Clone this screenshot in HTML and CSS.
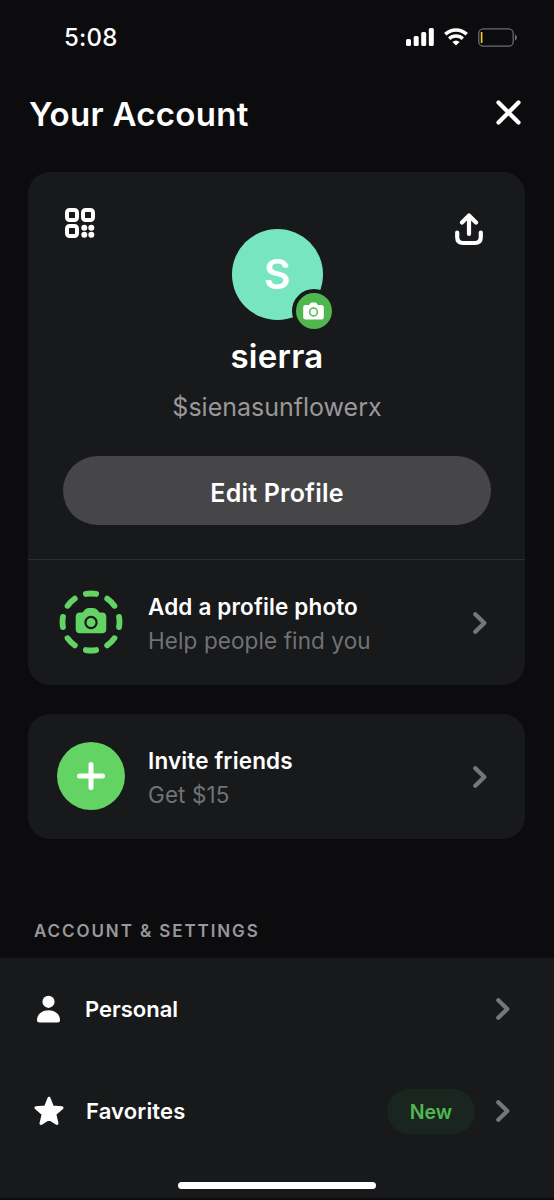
FILE: index.html
```
<!DOCTYPE html>
<html lang="en">
<head>
    <meta charset="UTF-8">
    <meta name="viewport" content="width=device-width, initial-scale=1.0">
    <title>Your Account</title>
    <link rel="stylesheet" href="styles.css">
</head>
<body>

<div class="screen">
    <!-- Status bar -->
    <div class="status-bar">
        <span class="time">5:08</span>
        <div class="status-icons">
            <svg class="signal" width="28" height="18" viewBox="0 0 28 18" fill="#fff">
                <rect x="0" y="11" width="5" height="7" rx="1.5"/>
                <rect x="7.7" y="8" width="5" height="10" rx="1.5"/>
                <rect x="15.2" y="4" width="5" height="14" rx="1.5"/>
                <rect x="22.8" y="0" width="5" height="18" rx="1.5"/>
            </svg>
            <svg class="wifi" width="24" height="18" viewBox="0 0 24 18" fill="none" stroke="#fff" stroke-width="3.4">
                <path d="M1.3 6.3A15.4 15.4 0 0 1 22.7 6.3"/>
                <path d="M5.2 10.8A9.8 9.8 0 0 1 18.8 10.8"/>
                <path d="M12 17.6L8.4 14.1A5 5 0 0 1 15.6 14.1Z" fill="#fff" stroke="none"/>
            </svg>
            <svg class="battery" width="39" height="19" viewBox="0 0 39 19" fill="none">
                <rect x="0.8" y="0.8" width="34.4" height="17.4" rx="4.5" stroke="#6c6c6c" stroke-width="1.3"/>
                <rect x="2.8" y="4" width="1.6" height="11" rx="0.6" fill="#f4d03c"/>
                <path d="M37 6.5C39.4 7.6 39.4 11.4 37 12.5Z" fill="#777"/>
            </svg>
        </div>
    </div>

    <header class="header">
        <h1>Your Account</h1>
        <svg class="close" width="25" height="25" viewBox="0 0 25 25" stroke="#fff" stroke-width="4.2" stroke-linecap="round">
            <path d="M2.5 2.5L22.5 22.5M22.5 2.5L2.5 22.5"/>
        </svg>
    </header>

    <!-- Profile card -->
    <section class="card">
        <div class="profile">
            <div class="profile-top">
                <svg class="qr" width="30" height="30" viewBox="0 0 30 30" fill="none" stroke="#fff" stroke-width="4">
                    <rect x="2" y="2" width="10" height="10" rx="2.5"/>
                    <rect x="18" y="2" width="10" height="10" rx="2.5"/>
                    <rect x="2" y="18" width="10" height="10" rx="2.5"/>
                    <g fill="#fff" stroke="none">
                        <circle cx="19.3" cy="19.7" r="3"/>
                        <circle cx="26.3" cy="19.7" r="3"/>
                        <circle cx="19.3" cy="26.7" r="3"/>
                        <circle cx="26.3" cy="26.7" r="3"/>
                    </g>
                </svg>
                <div class="avatar">
                    <span>S</span>
                    <div class="badge">
                        <svg width="21" height="18" viewBox="0 0 21 18">
                            <path d="M2.5 3H6.2L7.3 1.3Q7.8 0.5 8.7 0.5H12.3Q13.2 0.5 13.7 1.3L14.8 3H18.5Q20.8 3 20.8 5.3V15.2Q20.8 17.5 18.5 17.5H2.5Q0.2 17.5 0.2 15.2V5.3Q0.2 3 2.5 3Z" fill="#fff"/>
                            <circle cx="10.5" cy="10" r="3.9" fill="none" stroke="#50b74f" stroke-width="1.5"/>
                        </svg>
                    </div>
                </div>
                <svg class="share" width="28" height="33" viewBox="0 0 28 33" fill="none" stroke="#fff" stroke-width="4.2" stroke-linecap="round" stroke-linejoin="round">
                    <path d="M14 21V3M7 9.5L14 2.5L21 9.5"/>
                    <path d="M2.2 19.5V24Q2.2 30 8.2 30H19.8Q25.8 30 25.8 24V19.5"/>
                </svg>
            </div>
            <h2 class="name">sierra</h2>
            <p class="handle">$sienasunflowerx</p>
            <button class="edit-button" type="button">Edit Profile</button>
        </div>

        <div class="card-row">
            <div class="row-icon">
                <svg width="64" height="64" viewBox="0 0 64 64">
                    <circle cx="32" cy="32" r="28.5" fill="none" stroke="#63d363" stroke-width="5.8" stroke-linecap="round" pathLength="80" stroke-dasharray="4.6 5.4" stroke-dashoffset="2.3"/>
                    <path d="M21 22.5H23.5L26 19.600Q27.5 18 29.5 18H34.5Q36.5 18 38 19.6L40.5 22.5H43Q47.3 22.5 47.3 26.8V39Q47.3 43.3 43 43.3H21Q16.7 43.3 16.7 39V26.8Q16.7 22.5 21 22.5Z" fill="#63d363"/>
                    <circle cx="32" cy="32.5" r="5.6" fill="none" stroke="#18191b" stroke-width="2.2"/>
                </svg>
            </div>
            <div class="row-text">
                <h3 class="photo-title">Add a profile photo</h3>
                <p class="photo-sub">Help people find you</p>
            </div>
            <svg class="chevron" width="14" height="22" viewBox="0 0 14 22"><path d="M2.3 2.3L11.3 11L2.3 19.7"/></svg>
        </div>
    </section>

    <!-- Invite card -->
    <section class="card invite-card">
        <div class="card-row">
            <div class="row-icon">
                <svg width="68" height="68" viewBox="0 0 68 68">
                    <circle cx="34" cy="34" r="34" fill="#63d363"/>
                    <path d="M34 22.5V45.5M22.5 34H45.5" stroke="#fff" stroke-width="5" stroke-linecap="round"/>
                </svg>
            </div>
            <div class="row-text">
                <h3 class="invite-title">Invite friends</h3>
                <p class="invite-sub">Get $15</p>
            </div>
            <svg class="chevron" width="14" height="22" viewBox="0 0 14 22"><path d="M2.3 2.3L11.3 11L2.3 19.7"/></svg>
        </div>
    </section>

    <h4 class="section-label">ACCOUNT &amp; SETTINGS</h4>

    <!-- Settings list -->
    <div class="settings">
        <div class="setting">
            <svg width="30" height="30" viewBox="0 0 30 30" fill="#fff">
                <circle cx="14.5" cy="7.8" r="6.1"/>
                <path d="M3 26C3 20.5 8 16.3 14.5 16.3S26 20.5 26 26Q26 28.5 23.500 28.5H5.5Q3 28.5 3 26Z"/>
            </svg>
            <span class="setting-name personal">Personal</span>
            <svg class="chevron" width="14" height="22" viewBox="0 0 14 22"><path d="M2.3 2.3L11.3 11L2.3 19.7"/></svg>
        </div>
        <div class="setting">
            <svg width="30" height="30" viewBox="0 0 30 30" fill="#fff" stroke="#fff" stroke-width="3" stroke-linejoin="round">
                <path d="M15 2.2L18.5 11L28 11.8L20.8 18L23 27.4L15 22.4L7 27.4L9.2 18L2 11.8L11.5 11Z"/>
            </svg>
            <span class="setting-name favorites">Favorites</span>
            <span class="new-tag">New</span>
            <svg class="chevron" width="14" height="22" viewBox="0 0 14 22"><path d="M2.3 2.3L11.3 11L2.3 19.7"/></svg>
        </div>
        <div class="home-indicator"></div>
    </div>
</div>

</body>
</html>
```
FILE: styles.css
```
body {
    margin: 0;
    background-color: #0c0c0f;
    color: #fff;
    font-family: Inter, "Open Sans", sans-serif;
}

* {
    box-sizing: border-box;
}

h1, h2, h3, h4, p {
    margin: 0;
    font-weight: 600;
    white-space: nowrap;
}

svg {
    display: block;
    flex-shrink: 0;
}

.screen {
    width: 554px;
    height: 1200px;
    overflow: hidden;
    display: flex;
    flex-direction: column;
}

.status-bar {
    height: 74px;
    padding: 0 37px 0 64px;
    display: flex;
    align-items: center;
    justify-content: space-between;
}

.time {
    font-size: 24px;
    font-weight: 500;
    letter-spacing: 0.2px;
}

.status-icons {
    display: flex;
    align-items: center;
}

.wifi {
    margin: 0 10px;
}

.header {
    height: 98px;
    padding: 26px 33px 0 29px;
    display: flex;
    justify-content: space-between;
}

h1 {
    font-size: 33px;
    line-height: 29px;
    letter-spacing: 0.3px;
}

.card {
    width: 497px;
    margin-left: 28px;
    background-color: #18191b;
    border-radius: 22px;
}

.profile {
    height: 388px;
    padding: 36px 34px 0 35px;
    display: flex;
    flex-direction: column;
    border-bottom: 1px solid #2c2d2f;
}

.profile-top {
    height: 130px;
    padding: 0 8px 0 2px;
    display: flex;
    justify-content: space-between;
}

.avatar {
    position: relative;
    width: 91px;
    height: 91px;
    margin: 21px 0 0 4px;
    border-radius: 50%;
    background-color: #77e6c0;
    text-align: center;
    font-size: 41px;
    font-weight: 600;
    line-height: 91px;
}

.badge {
    position: absolute;
    left: 60px;
    top: 60px;
    width: 44px;
    height: 44px;
    border: 4px solid #18191b;
    border-radius: 50%;
    background-color: #50b74f;
    display: flex;
    align-items: center;
    justify-content: center;
}

.share {
    margin-top: 5px;
}

.name {
    height: 50px;
    line-height: 37px;
    font-size: 33px;
    letter-spacing: 0.3px;
    text-align: center;
}

.handle {
    height: 68px;
    line-height: 38px;
    font-size: 25px;
    font-weight: 400;
    text-align: center;
    color: #98989a;
}

.edit-button {
    height: 69px;
    padding: 4px 0 0;
    border: none;
    border-radius: 35px;
    background-color: #464648;
    color: #fff;
    font-family: inherit;
    font-size: 25px;
    font-weight: 600;
    letter-spacing: 0.2px;
}

.card-row {
    height: 125px;
    padding: 0 38px 0 29px;
    display: flex;
    align-items: center;
}

.row-icon {
    width: 68px;
    margin: -2px 23px 0 0;
    display: flex;
    justify-content: center;
}

.row-text {
    flex: 1;
    padding-top: 2px;
    line-height: 34px;
    font-size: 22.5px;
}

.row-text h3 {
    font-size: 22.5px;
    letter-spacing: 0.15px;
}

.row-text p {
    font-weight: 400;
    letter-spacing: 0.1px;
    color: #717274;
}

.chevron {
    fill: none;
    stroke: #757678;
    stroke-width: 4.3;
    stroke-linecap: round;
    stroke-linejoin: round;
}

.invite-card {
    margin-top: 29px;
}

.section-label {
    height: 119px;
    padding: 80px 0 0 34px;
    line-height: 24px;
    font-size: 17px;
    letter-spacing: 1.9px;
    color: #98989a;
}

.settings {
    height: 242px;
    background-color: #18191b;
    border-bottom: 2px solid #0c0c0f;
}

.setting {
    height: 102px;
    padding: 0 44px 0 34px;
    display: flex;
    align-items: center;
}

.setting-name {
    flex: 1;
    margin-left: 21px;
    font-size: 22px;
    font-weight: 600;
}

.favorites {
    margin-left: 22px;
    letter-spacing: 0.15px;
}

.new-tag {
    width: 88px;
    height: 45px;
    margin-right: 21px;
    border-radius: 23px;
    background-color: #1a251f;
    color: #50b74f;
    font-size: 19.5px;
    font-weight: 600;
    line-height: 47px;
    text-align: center;
}

.home-indicator {
    width: 198px;
    height: 7px;
    margin: 20px auto 0;
    border-radius: 4px;
    background-color: #fff;
}
```
